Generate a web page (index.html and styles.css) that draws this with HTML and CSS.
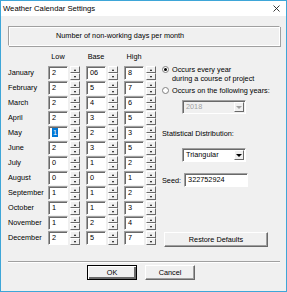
FILE: index.html
```html
<!DOCTYPE html>
<html lang="en">

<head>
  <meta charset="UTF-8">
  <title>Weather Calendar Settings</title>
  <link rel="stylesheet" href="styles.css">
</head>

<body>
  <div class="window">
    <div class="titlebar">
      <span class="title">Weather Calendar Settings</span>
      <svg class="close" width="7" height="7" viewBox="0 0 7 7">
        <path d="M0.5 0.5 L6.5 6.5 M6.5 0.5 L0.5 6.5" stroke="#222" stroke-width="0.9" fill="none" />
      </svg>
    </div>

    <div class="content">
      <div class="banner">Number of non-working days per month</div>

      <div class="main">
        <div class="days">
          <div></div>
          <div class="head">Low</div>
          <div class="head">Base</div>
          <div class="head">High</div>

          <div class="month">January</div>
          <div class="spin"><div class="field">2</div><div class="updown"><span class="up"></span><span class="down"></span></div></div>
          <div class="spin"><div class="field">06</div><div class="updown"><span class="up"></span><span class="down"></span></div></div>
          <div class="spin"><div class="field">8</div><div class="updown"><span class="up"></span><span class="down"></span></div></div>

          <div class="month">February</div>
          <div class="spin"><div class="field">2</div><div class="updown"><span class="up"></span><span class="down"></span></div></div>
          <div class="spin"><div class="field">5</div><div class="updown"><span class="up"></span><span class="down"></span></div></div>
          <div class="spin"><div class="field">7</div><div class="updown"><span class="up"></span><span class="down"></span></div></div>

          <div class="month">March</div>
          <div class="spin"><div class="field">2</div><div class="updown"><span class="up"></span><span class="down"></span></div></div>
          <div class="spin"><div class="field">4</div><div class="updown"><span class="up"></span><span class="down"></span></div></div>
          <div class="spin"><div class="field">6</div><div class="updown"><span class="up"></span><span class="down"></span></div></div>

          <div class="month">April</div>
          <div class="spin"><div class="field">2</div><div class="updown"><span class="up"></span><span class="down"></span></div></div>
          <div class="spin"><div class="field">3</div><div class="updown"><span class="up"></span><span class="down"></span></div></div>
          <div class="spin"><div class="field">5</div><div class="updown"><span class="up"></span><span class="down"></span></div></div>

          <div class="month">May</div>
          <div class="spin"><div class="field"><span class="selected">1</span></div><div class="updown"><span class="up"></span><span class="down"></span></div></div>
          <div class="spin"><div class="field">2</div><div class="updown"><span class="up"></span><span class="down"></span></div></div>
          <div class="spin"><div class="field">3</div><div class="updown"><span class="up"></span><span class="down"></span></div></div>

          <div class="month">June</div>
          <div class="spin"><div class="field">2</div><div class="updown"><span class="up"></span><span class="down"></span></div></div>
          <div class="spin"><div class="field">3</div><div class="updown"><span class="up"></span><span class="down"></span></div></div>
          <div class="spin"><div class="field">5</div><div class="updown"><span class="up"></span><span class="down"></span></div></div>

          <div class="month">July</div>
          <div class="spin"><div class="field">0</div><div class="updown"><span class="up"></span><span class="down"></span></div></div>
          <div class="spin"><div class="field">1</div><div class="updown"><span class="up"></span><span class="down"></span></div></div>
          <div class="spin"><div class="field">2</div><div class="updown"><span class="up"></span><span class="down"></span></div></div>

          <div class="month">August</div>
          <div class="spin"><div class="field">0</div><div class="updown"><span class="up"></span><span class="down"></span></div></div>
          <div class="spin"><div class="field">0</div><div class="updown"><span class="up"></span><span class="down"></span></div></div>
          <div class="spin"><div class="field">1</div><div class="updown"><span class="up"></span><span class="down"></span></div></div>

          <div class="month">September</div>
          <div class="spin"><div class="field">1</div><div class="updown"><span class="up"></span><span class="down"></span></div></div>
          <div class="spin"><div class="field">1</div><div class="updown"><span class="up"></span><span class="down"></span></div></div>
          <div class="spin"><div class="field">2</div><div class="updown"><span class="up"></span><span class="down"></span></div></div>

          <div class="month">October</div>
          <div class="spin"><div class="field">1</div><div class="updown"><span class="up"></span><span class="down"></span></div></div>
          <div class="spin"><div class="field">1</div><div class="updown"><span class="up"></span><span class="down"></span></div></div>
          <div class="spin"><div class="field">3</div><div class="updown"><span class="up"></span><span class="down"></span></div></div>

          <div class="month">November</div>
          <div class="spin"><div class="field">1</div><div class="updown"><span class="up"></span><span class="down"></span></div></div>
          <div class="spin"><div class="field">2</div><div class="updown"><span class="up"></span><span class="down"></span></div></div>
          <div class="spin"><div class="field">4</div><div class="updown"><span class="up"></span><span class="down"></span></div></div>

          <div class="month">December</div>
          <div class="spin"><div class="field">2</div><div class="updown"><span class="up"></span><span class="down"></span></div></div>
          <div class="spin"><div class="field">5</div><div class="updown"><span class="up"></span><span class="down"></span></div></div>
          <div class="spin"><div class="field">7</div><div class="updown"><span class="up"></span><span class="down"></span></div></div>
        </div>

        <div class="side">
          <div class="option">
            <span class="radio checked"></span>
            <span>Occurs every year<br>during a course of project</span>
          </div>
          <div class="option second">
            <span class="radio"></span>
            <span>Occurs on the following years:</span>
          </div>
          <div class="combo disabled">
            <span class="value">2018</span>
            <span class="drop"><span class="arrow"></span></span>
          </div>

          <div class="label-dist">Statistical Distribution:</div>
          <div class="combo">
            <span class="value">Triangular</span>
            <span class="drop"><span class="arrow"></span></span>
          </div>

          <div class="seed">
            <span>Seed:</span>
            <div class="field seed-field">322752924</div>
          </div>

          <button class="btn restore">Restore Defaults</button>
        </div>
      </div>

      <div class="sep"></div>

      <div class="actions">
        <button class="btn default">OK</button>
        <button class="btn">Cancel</button>
      </div>
    </div>
  </div>
</body>

</html>
```

FILE: styles.css
```css
* {
  box-sizing: border-box;
}

body {
  margin: 0;
  font-family: "Liberation Sans", Arial, sans-serif;
  font-size: 7.3px;
  color: #000;
}

.window {
  width: 287px;
  height: 292px;
  border: 1px solid #3ea6d8;
  background: #f0f0f0;
}

.titlebar {
  height: 15px;
  background: #fff;
  display: flex;
  align-items: center;
  justify-content: space-between;
  padding: 0 6px 0 2px;
  font-size: 7.7px;
}

.content {
  padding: 0 6px 0 7px;
}

.banner {
  margin: 10px 0 6px;
  height: 20px;
  line-height: 18px;
  padding-left: 47px;
  border: 1px solid #a0a0a0;
  border-right-color: #fff;
  border-bottom-color: #fff;
  box-shadow: inset 1px 1px 0 #fff, 1px 1px 0 #a0a0a0;
}

.main {
  display: flex;
  height: 195px;
}

.days {
  display: grid;
  grid-template-columns: 40px 38px 38px 32px;
  grid-template-rows: 13px repeat(12, 14px);
  row-gap: 1px;
  width: 148px;
}

.head {
  line-height: 10px;
  width: 20px;
  text-align: center;
}

.month {
  line-height: 14px;
  white-space: nowrap;
}

.spin {
  display: flex;
  gap: 2px;
}

.field {
  width: 20px;
  height: 14px;
  background: #fff;
  border: 1px solid #a0a0a0;
  border-right-color: #fff;
  border-bottom-color: #fff;
  box-shadow: inset 1px 1px 0 #696969;
  padding-left: 3px;
  line-height: 12px;
}

.selected {
  background: #0078d7;
  color: #fff;
  padding: 0 1px;
}

.updown {
  width: 10px;
  display: flex;
  flex-direction: column;
}

.up,
.down {
  flex: 1;
  display: flex;
  align-items: center;
  justify-content: center;
  background: #f0f0f0;
  border: 1px solid;
  border-color: #fff #696969 #696969 #fff;
}

.up::after,
.down::after {
  content: "";
  border-left: 1.5px solid transparent;
  border-right: 1.5px solid transparent;
}

.up::after {
  border-bottom: 2px solid #000;
}

.down::after {
  border-top: 2px solid #000;
}

.side {
  display: flex;
  flex-direction: column;
  align-items: flex-start;
  padding-top: 13px;
  margin-left: 6px;
  line-height: 9px;
}

.option {
  display: flex;
  gap: 3px;
}

.option.second {
  margin-top: 3px;
}

.radio {
  width: 7px;
  height: 7px;
  margin-top: 1px;
  border-radius: 50%;
  background: #fff;
  border: 1px solid #808080;
  display: flex;
  align-items: center;
  justify-content: center;
}

.radio.checked::after {
  content: "";
  width: 3px;
  height: 3px;
  border-radius: 50%;
  background: #000;
}

.combo {
  width: 64px;
  height: 14px;
  margin-left: 20px;
  display: flex;
  background: #fff;
  border: 1px solid #a0a0a0;
  border-right-color: #fff;
  border-bottom-color: #fff;
  box-shadow: inset 1px 1px 0 #696969;
  padding: 1px;
}

.combo .value {
  flex: 1;
  padding-left: 2px;
  line-height: 10px;
}

.combo .drop {
  width: 10px;
  display: flex;
  align-items: center;
  justify-content: center;
  border: 1px solid;
  border-color: #fff #696969 #696969 #fff;
  background: #f0f0f0;
}

.combo .arrow {
  border-left: 3px solid transparent;
  border-right: 3px solid transparent;
  border-top: 3px solid #000;
}

.combo.disabled {
  margin-top: 5px;
  background: #f0f0f0;
  color: #a0a0a0;
}

.combo.disabled .arrow {
  border-top-color: #a0a0a0;
}

.label-dist {
  margin-top: 15px;
}

.label-dist + .combo {
  margin-top: 10px;
}

.seed {
  display: flex;
  align-items: center;
  gap: 3px;
  margin-top: 11px;
}

.seed-field {
  width: 64px;
  line-height: 12px;
}

.btn {
  font-family: inherit;
  font-size: inherit;
  color: #000;
  height: 15px;
  padding: 0;
  background: #f0f0f0;
  border: 1px solid;
  border-color: #fff #696969 #696969 #fff;
  box-shadow: inset -1px -1px 0 #a0a0a0;
}

.restore {
  width: 104px;
  margin-top: auto;
  margin-left: 2px;
}

.sep {
  margin-top: 14px;
  border-top: 1px solid #a0a0a0;
  border-bottom: 1px solid #fff;
}

.actions {
  display: flex;
  gap: 8px;
  padding-left: 79px;
  margin-top: 2px;
}

.actions .btn {
  width: 50px;
}

.btn.default {
  outline: 1px solid #000;
  outline-offset: -1px;
  border-color: #000;
  box-shadow: inset 1px 1px 0 #fff, inset -2px -2px 0 #696969;
}
```
